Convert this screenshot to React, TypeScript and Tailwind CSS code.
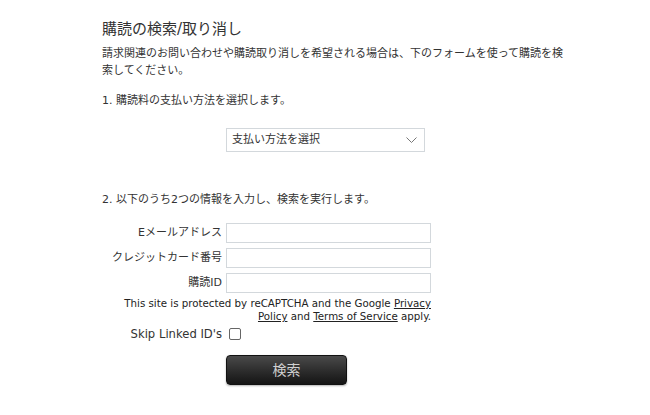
import * as React from "react"

const jp = { fontFamily: '"DejaVu Sans", "Noto Sans CJK JP", sans-serif' }
const latin = { fontFamily: '"DejaVu Sans", sans-serif' }

const Field: React.FC<{ label: string }> = ({ label }) => (
  <div className="flex items-center h-[20px]">
    <label className="w-[120px] text-right text-[11px] leading-[20px] text-[#333] whitespace-nowrap">{label}</label>
    <input type="text" className="ml-[4px] w-[205px] h-[20px] border border-[#d3d8dc] bg-white outline-none" />
  </div>
)

export default function App() {
  return (
    <div className="min-h-[415px] bg-white text-[#333]" style={jp}>
      <div className="ml-[102px] w-[470px] pt-[19px]">
        <h1 className="text-[15px] leading-[20px] font-normal text-[#333]">購読の検索/取り消し</h1>
        <p className="mt-[6px] text-[11px] leading-[17px]">
          請求関連のお問い合わせや購読取り消しを希望される場合は、下のフォームを使って購読を検索してください。
        </p>

        <p className="mt-[13px] text-[11px] leading-[17px]">1. 購読料の支払い方法を選択します。</p>

        <div className="mt-[19px] ml-[124px] w-[199px] h-[24px] border border-[#d3d8dc] flex items-center justify-between pl-[5px] pr-[7px] text-[11px]">
          <span>支払い方法を選択</span>
          <svg width="11" height="7" viewBox="0 0 11 7" fill="none">
            <polyline points="0.5,0.5 5.5,5.5 10.5,0.5" stroke="#777" strokeWidth="1" />
          </svg>
        </div>

        <p className="mt-[39px] text-[11px] leading-[17px]">2. 以下のうち2つの情報を入力し、検索を実行します。</p>

        <div className="mt-[15px] flex flex-col gap-[5px]">
          <Field label="Eメールアドレス" />
          <Field label="クレジットカード番号" />
          <Field label="購読ID" />
        </div>

        <div className="mt-[4px] w-[329px] text-right text-[10.25px] leading-[13px] text-[#222]" style={latin}>
          <div>
            This site is protected by reCAPTCHA and the Google <a className="underline">Privacy</a>
          </div>
          <div>
            <a className="underline">Policy</a> and <a className="underline">Terms of Service</a> apply.
          </div>
        </div>

        <div className="mt-[4px] flex items-center h-[14px]">
          <span className="w-[120px] text-right text-[11.6px] leading-[14px] text-[#333]" style={latin}>
            Skip Linked ID's
          </span>
          <span className="ml-[7px] w-[12px] h-[12px] border border-[#666] rounded-[2px] bg-white" />
        </div>

        <button className="mt-[14px] ml-[124px] w-[121px] h-[30px] rounded-[4px] border border-[#111] bg-gradient-to-b from-[#4a4a4a] to-[#151515] text-[14px] text-[#d0d0d0] shadow-[0_1px_2px_rgba(0,0,0,0.3)]">
          検索
        </button>
      </div>
    </div>
  )
}
